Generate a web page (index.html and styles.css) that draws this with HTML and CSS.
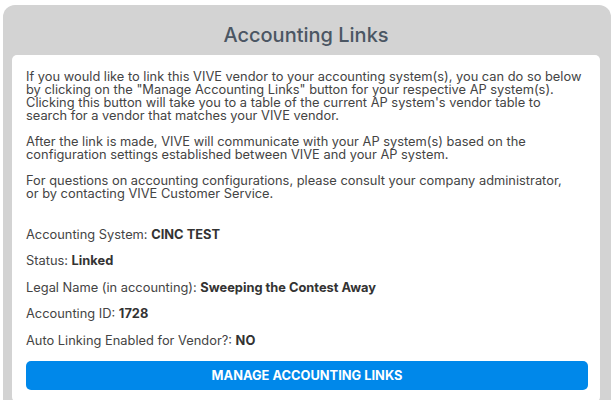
FILE: index.html
```html
<!DOCTYPE html>
<html lang="en">
<head>
    <meta charset="UTF-8">
    <meta name="viewport" content="width=device-width, initial-scale=1.0">
    <title>Accounting Links</title>
    <link rel="stylesheet" href="styles.css">
</head>
<body>

    <div class="panel">
        <div class="panel-title">Accounting Links</div>
        <div class="panel-body">
            <p>If you would like to link this VIVE vendor to your accounting system(s), you can do so below by clicking on the "Manage Accounting Links" button for your respective AP system(s). Clicking this button will take you to a table of the current AP system's vendor table to<br>search for a vendor that matches your VIVE vendor.</p>
            <p>After the link is made, VIVE will communicate with your AP system(s) based on the configuration settings established between VIVE and your AP system.</p>
            <p>For questions on accounting configurations, please consult your company administrator,<br>or by contacting VIVE Customer Service.</p>

            <div class="details">
                <div class="row">Accounting System: <b>CINC TEST</b></div>
                <div class="row">Status: <b>Linked</b></div>
                <div class="row">Legal Name (in accounting): <b>Sweeping the Contest Away</b></div>
                <div class="row">Accounting ID: <b>1728</b></div>
                <div class="row">Auto Linking Enabled for Vendor?: <b>NO</b></div>
            </div>

            <button class="manage-btn">Manage Accounting Links</button>
        </div>
    </div>

</body>
</html>
```

FILE: styles.css
```css
* {
    box-sizing: border-box;
}

html, body {
    margin: 0;
    background-color: #fff;
    font-family: "Inter", "Open Sans", sans-serif;
}

.panel {
    margin: 5px 3px 0 3px;
    padding: 0 11px 10px 9px;
    background-color: #d3d3d3;
    border-radius: 12px 12px 0 0;
}

.panel-title {
    height: 50px;
    padding-top: 18px;
    text-align: center;
    font-size: 20px;
    line-height: 24px;
    font-weight: 500;
    color: #4b5663;
}

.panel-body {
    background-color: #fff;
    border-radius: 5px;
    padding: 15px 12px 12px 14px;
    color: #444;
    font-size: 12.85px;
    line-height: 13px;
}

.panel-body p {
    margin: 0 0 13px 0;
}

.details {
    padding-top: 15px;
}

.row {
    margin-bottom: 13.4px;
}

.row:last-child {
    margin-bottom: 0;
}

.row b {
    font-weight: 700;
    color: #333;
}

.manage-btn {
    display: block;
    width: 100%;
    height: 29px;
    margin-top: 14px;
    border: none;
    border-radius: 5px;
    background-color: #0088ea;
    color: #fff;
    font-family: inherit;
    font-size: 12.85px;
    font-weight: 700;
    text-transform: uppercase;
}
```
